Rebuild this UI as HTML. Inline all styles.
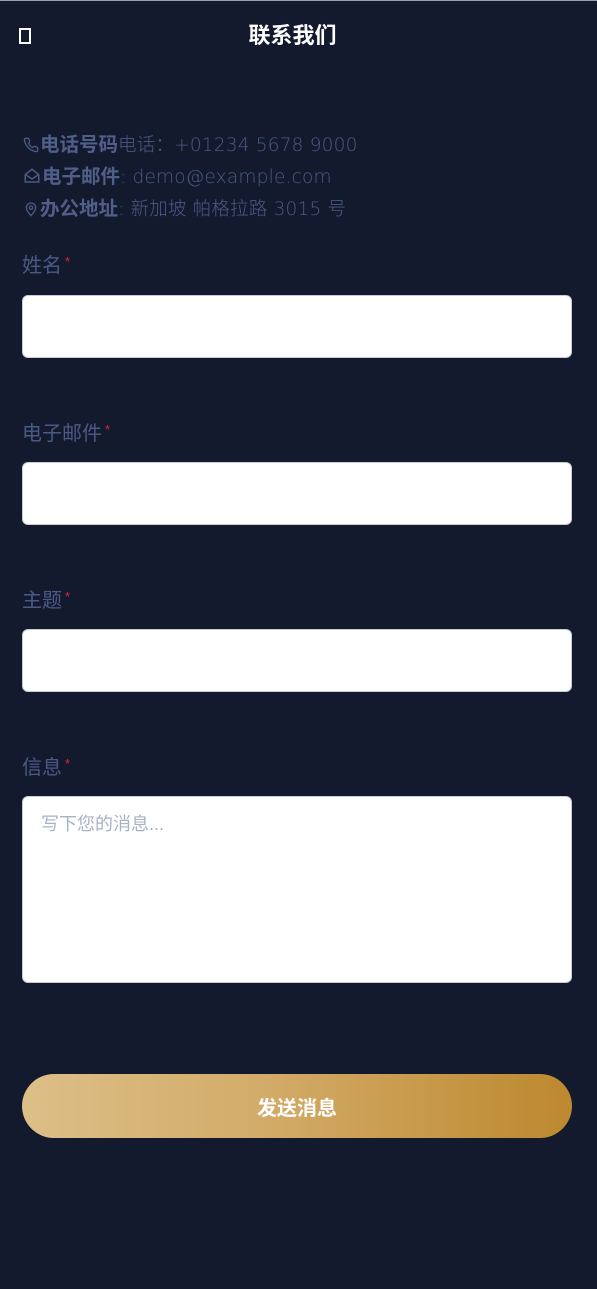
<!DOCTYPE html>
<html><head><meta charset="utf-8"><style>
*{box-sizing:border-box;margin:0;padding:0}
html,body{width:597px;height:1289px;background:#141a2d;overflow:hidden}
body{font-family:"Liberation Sans","Noto Sans CJK SC",sans-serif;position:relative;border-top:1px solid #9aa0aa}
.t{position:absolute;left:-6px;width:597px;top:20px;text-align:center;color:#fff;font-weight:bold;font-size:22px;line-height:30px}
.sq{position:absolute;left:19px;top:27px;width:12px;height:16px;border:2px solid #fff}
.c{position:absolute;left:22px;color:#4a5a86;font-size:18.5px;line-height:24px;white-space:nowrap;font-family:"DejaVu Sans","Noto Sans CJK SC",sans-serif;font-weight:300;letter-spacing:0.2px}
.c b{font-weight:bold;color:#4f5f8a;font-size:19.5px;font-family:"Noto Sans CJK SC",sans-serif;letter-spacing:0}
.c svg{vertical-align:-2px}
.l{position:absolute;left:22px;color:#4a5a86;font-size:20px;line-height:26px}
.l i{color:#e0243c;font-style:normal;font-size:13px;vertical-align:6px;margin-left:3px}
.in{position:absolute;left:22px;width:550px;height:63px;background:#fff;border:1px solid #c8ccd4;border-radius:6px}
.ph{position:absolute;left:18px;top:13px;color:#a7b2c6;font-size:18px}
.btn{position:absolute;left:22px;top:1073px;width:550px;height:64px;border-radius:32px;background:linear-gradient(90deg,#dcbf88,#d2ab68 45%,#bd882e);color:#fff;font-weight:bold;font-size:20px;text-align:center;line-height:70px}
</style></head><body>
<div class="sq"></div>
<div class="t">联系我们</div>
<div class="c" style="top:130px"><svg width="18" height="16" viewBox="0 0 24 24" fill="none" stroke="#4a5a86" stroke-width="2"><path d="M22 16.9v3a2 2 0 0 1-2.2 2 19.8 19.8 0 0 1-8.6-3.1 19.5 19.5 0 0 1-6-6A19.8 19.8 0 0 1 2.1 4.2 2 2 0 0 1 4.1 2h3a2 2 0 0 1 2 1.7c.1 1 .4 1.9.7 2.8a2 2 0 0 1-.5 2.1L8.1 9.9a16 16 0 0 0 6 6l1.3-1.3a2 2 0 0 1 2.1-.4c.9.3 1.8.6 2.8.7a2 2 0 0 1 1.7 2z"/></svg><b>电话号码</b>电话：+01234 5678 9000</div>
<div class="c" style="top:162px"><svg width="20" height="18" viewBox="0 0 24 24" fill="none" stroke="#4a5a86" stroke-width="2"><path d="M3 10l9-7 9 7v10H3z"/><path d="M3 10l9 6 9-6"/></svg><b>电子邮件</b>: demo@example.com</div>
<div class="c" style="top:194px"><svg width="18" height="16" viewBox="0 0 24 24" fill="none" stroke="#4a5a86" stroke-width="2"><path d="M12 22s-7-7-7-12a7 7 0 0 1 14 0c0 5-7 12-7 12z"/><circle cx="12" cy="10" r="2.5"/></svg><b>办公地址</b>: 新加坡 帕格拉路 3015 号</div>
<div class="l" style="top:248px">姓名<i>*</i></div>
<div class="in" style="top:294px"></div>
<div class="l" style="top:416px">电子邮件<i>*</i></div>
<div class="in" style="top:461px"></div>
<div class="l" style="top:583px">主题<i>*</i></div>
<div class="in" style="top:628px"></div>
<div class="l" style="top:750px">信息<i>*</i></div>
<div class="in" style="top:795px;height:187px"><div class="ph">写下您的消息...</div></div>
<div class="btn">发送消息</div>
</body></html>
